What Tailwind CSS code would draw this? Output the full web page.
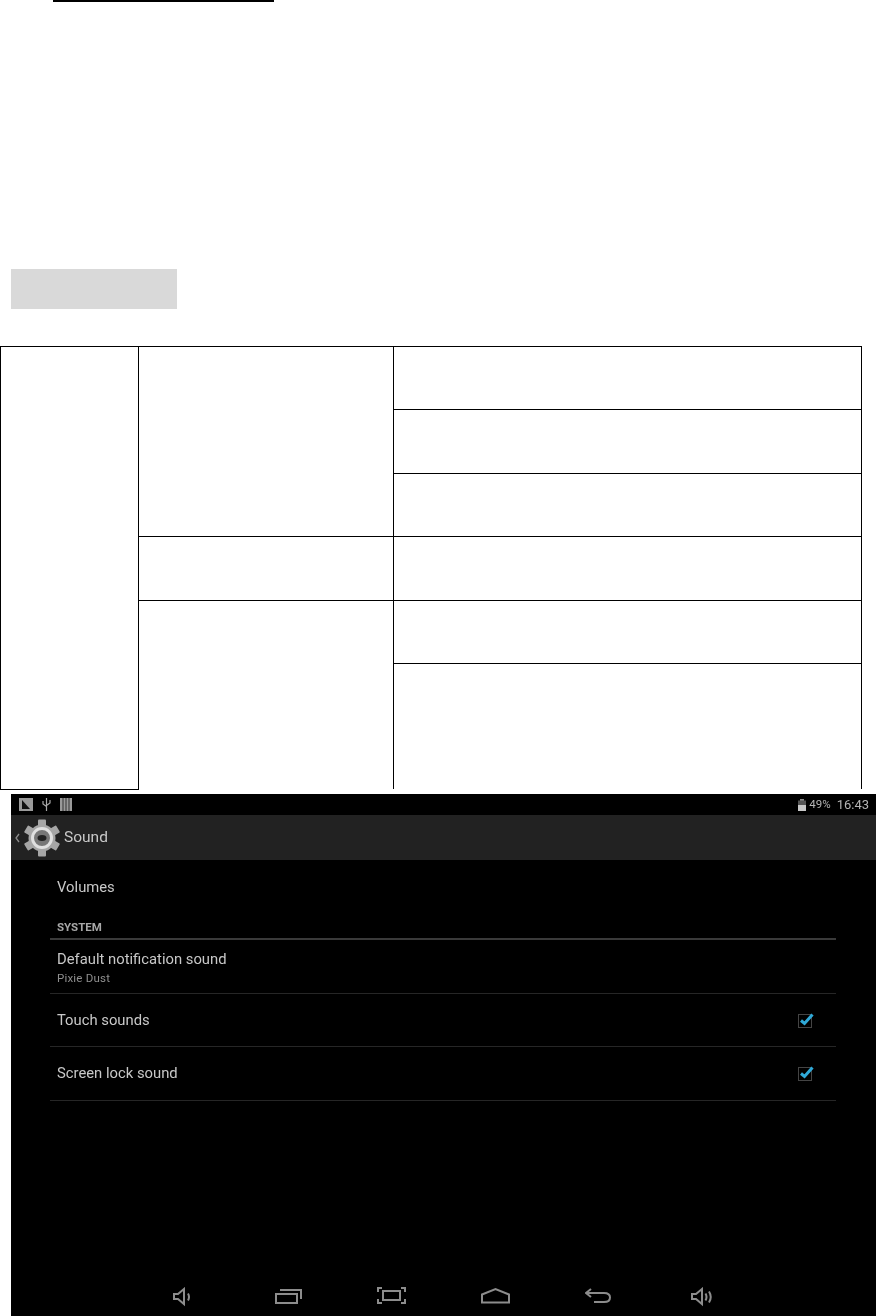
<!DOCTYPE html>
<html lang="en">
<head>
    <meta charset="UTF-8">
    <title>Sound settings</title>
    <script src="https://cdn.jsdelivr.net/npm/@tailwindcss/browser@4"></script>
</head>
<body class="bg-white w-[876px] h-[1316px] overflow-hidden font-['Roboto',sans-serif]">

    <!-- Underline left over from the heading -->
    <div class="ml-[53px] w-[221px] h-[2px] bg-black"></div>

    <!-- Grey label -->
    <div class="ml-[11px] mt-[267px] w-[166px] h-[40px] bg-[#d9d9d9]"></div>

    <!-- Table -->
    <div class="mt-[37px] w-[862px] h-[444px] flex items-start">
        <div class="w-[139px] h-[444px] border border-black"></div>
        <div class="flex-1 h-[443px] flex flex-col border-t border-r border-black">
            <div class="flex h-[190px] border-b border-black">
                <div class="w-[255px] border-r border-black"></div>
                <div class="flex-1 flex flex-col">
                    <div class="h-[63px] border-b border-black"></div>
                    <div class="h-[64px] border-b border-black"></div>
                    <div class="flex-1"></div>
                </div>
            </div>
            <div class="flex h-[64px] border-b border-black">
                <div class="w-[255px] border-r border-black"></div>
                <div class="flex-1"></div>
            </div>
            <div class="flex flex-1">
                <div class="w-[255px] border-r border-black"></div>
                <div class="flex-1 flex flex-col">
                    <div class="h-[63px] border-b border-black"></div>
                    <div class="flex-1"></div>
                </div>
            </div>
        </div>
    </div>

    <!-- Tablet screenshot -->
    <div class="ml-[11px] mt-[4px] w-[865px] h-[522px] bg-black flex flex-col text-[#c8c8c8] blur-[0.4px]">
        <!-- Status bar -->
        <div class="h-[21px] flex items-center pl-[8px] pr-[7px]">
            <svg width="14" height="13" viewBox="0 0 14 13"><rect width="14" height="13" fill="#9a9a9a"/><path d="M3 2l8 9H3z" fill="#111"/></svg>
            <svg class="ml-[9px]" width="9" height="13" viewBox="0 0 9 13" fill="none" stroke="#a8a8a8" stroke-width="1.200"><path d="M4.500 0v13M1 3v3l3.500 2.500M8 2v3L4.500 7.500"/></svg>
            <svg class="ml-[9px]" width="12" height="13" viewBox="0 0 12 13"><rect width="12" height="13" fill="#9a9a9a"/><path d="M3 0v13M6 0v13M9 0v13" stroke="#333" stroke-width="1"/></svg>
            <svg class="ml-auto" width="8" height="12" viewBox="0 0 8 12"><rect x="2" width="4" height="2" fill="#8a8a8a"/><rect y="1.500" width="8" height="10.500" fill="#555"/><rect y="6" width="8" height="6" fill="#c8c8c8"/></svg>
            <span class="ml-[3px] text-[11.500px] text-[#b4b4b4]">49%</span>
            <span class="ml-[6px] text-[13px] leading-none text-[#b4b4b4]">16:43</span>
        </div>

        <!-- Action bar -->
        <div class="h-[45px] bg-[#222222] flex items-center">
            <svg class="ml-[4px]" width="5" height="10" viewBox="0 0 5 10" fill="none" stroke="#8c8c8c" stroke-width="1.300"><path d="M4 1L1 5l3 4"/></svg>
            <svg class="ml-[4px]" width="36" height="38" viewBox="0 0 36 38">
                <g fill="#a6a6a6">
                    <circle cx="18" cy="19" r="13.500"/>
                    <rect x="14" y="0.500" width="8" height="37" rx="1"/>
                    <rect x="14" y="0.500" width="8" height="37" rx="1" transform="rotate(60 18 19)"/>
                    <rect x="14" y="0.500" width="8" height="37" rx="1" transform="rotate(120 18 19)"/>
                </g>
                <circle cx="18" cy="19" r="9.500" fill="#777" stroke="#e0e0e0" stroke-width="3"/>
                <ellipse cx="18" cy="19" rx="4.500" ry="3" fill="#222"/>
            </svg>
            <span class="ml-[4px] pt-[1px] text-[15.500px] text-[#c8c8c8]">Sound</span>
        </div>

        <!-- Settings list -->
        <div class="pl-[39px] pr-[40px] flex-1 flex flex-col">
            <div class="h-[54px] pl-[7px] flex items-center text-[14.800px]">Volumes</div>
            <div class="h-[24px] pl-[7px] flex items-end pb-[5px] text-[11.500px] font-bold leading-none text-[#a8a8a8]">SYSTEM</div>
            <div class="h-[2px] bg-[#3a3a3a]"></div>
            <div class="h-[54px] pl-[7px] pt-[9px] flex flex-col border-b border-[#262626]">
                <span class="text-[14.800px] leading-[20px]">Default notification sound</span>
                <span class="mt-[1px] text-[11.500px] leading-[16px] text-[#8f8f8f] tracking-[0.2px]">Pixie Dust</span>
            </div>
            <div class="h-[53px] pl-[7px] pr-[22px] flex items-center justify-between border-b border-[#262626]">
                <span class="text-[14.800px]">Touch sounds</span>
                <svg width="16" height="15" viewBox="0 0 16 15" fill="none"><rect x="0.500" y="1.500" width="13" height="13" stroke="#444"/><path d="M3 7.500l3.500 3L14.500 1.500" stroke="#2fa9d8" stroke-width="3"/></svg>
            </div>
            <div class="h-[54px] pl-[7px] pr-[22px] flex items-center justify-between border-b border-[#262626]">
                <span class="text-[14.800px]">Screen lock sound</span>
                <svg width="16" height="15" viewBox="0 0 16 15" fill="none"><rect x="0.500" y="1.500" width="13" height="13" stroke="#444"/><path d="M3 7.500l3.500 3L14.500 1.500" stroke="#2fa9d8" stroke-width="3"/></svg>
            </div>
            <div class="flex-1"></div>
        </div>

        <!-- Navigation bar -->
        <div class="h-[40px] flex items-start pt-[11px] pl-[162px]">
            <svg width="19" height="20" viewBox="0 0 19 20" fill="none" stroke="#8c8c8c" stroke-width="2"><path d="M1 7v5h4l6 5V2L5 7zM15 6.500q2 3.500 0 7"/></svg>
            <svg class="ml-[83px]" width="27" height="18" viewBox="0 0 27 18" fill="none" stroke="#8c8c8c" stroke-width="2"><rect x="1" y="7" width="21" height="9"/><path d="M5 3h21v9"/></svg>
            <svg class="ml-[75px]" width="29" height="18" viewBox="0 0 29 18" fill="none" stroke="#8c8c8c" stroke-width="2"><rect x="6" y="4" width="17" height="9"/><path d="M1 5V1h4M24 1h4v4M1 12v4h4M24 16h4v-4"/></svg>
            <svg class="ml-[75px]" width="29" height="18" viewBox="0 0 29 18" fill="none" stroke="#8c8c8c" stroke-width="2"><path d="M1 15.500V7.500L14.500 2 28 7.500v8z"/></svg>
            <svg class="ml-[75px]" width="26" height="18" viewBox="0 0 26 18" fill="none" stroke="#8c8c8c" stroke-width="2"><path d="M6 2L1 6l5 4M1 6h18q6 0 6 4.500T19 15H9"/></svg>
            <svg class="ml-[80px]" width="24" height="20" viewBox="0 0 24 20" fill="none" stroke="#8c8c8c" stroke-width="2"><path d="M1 7v5h4l6 5V2L5 7zM14.500 6.500q2 3.500 0 7M18 4.500q3.500 5.500 0 11"/></svg>
        </div>
    </div>
</body>
</html>
